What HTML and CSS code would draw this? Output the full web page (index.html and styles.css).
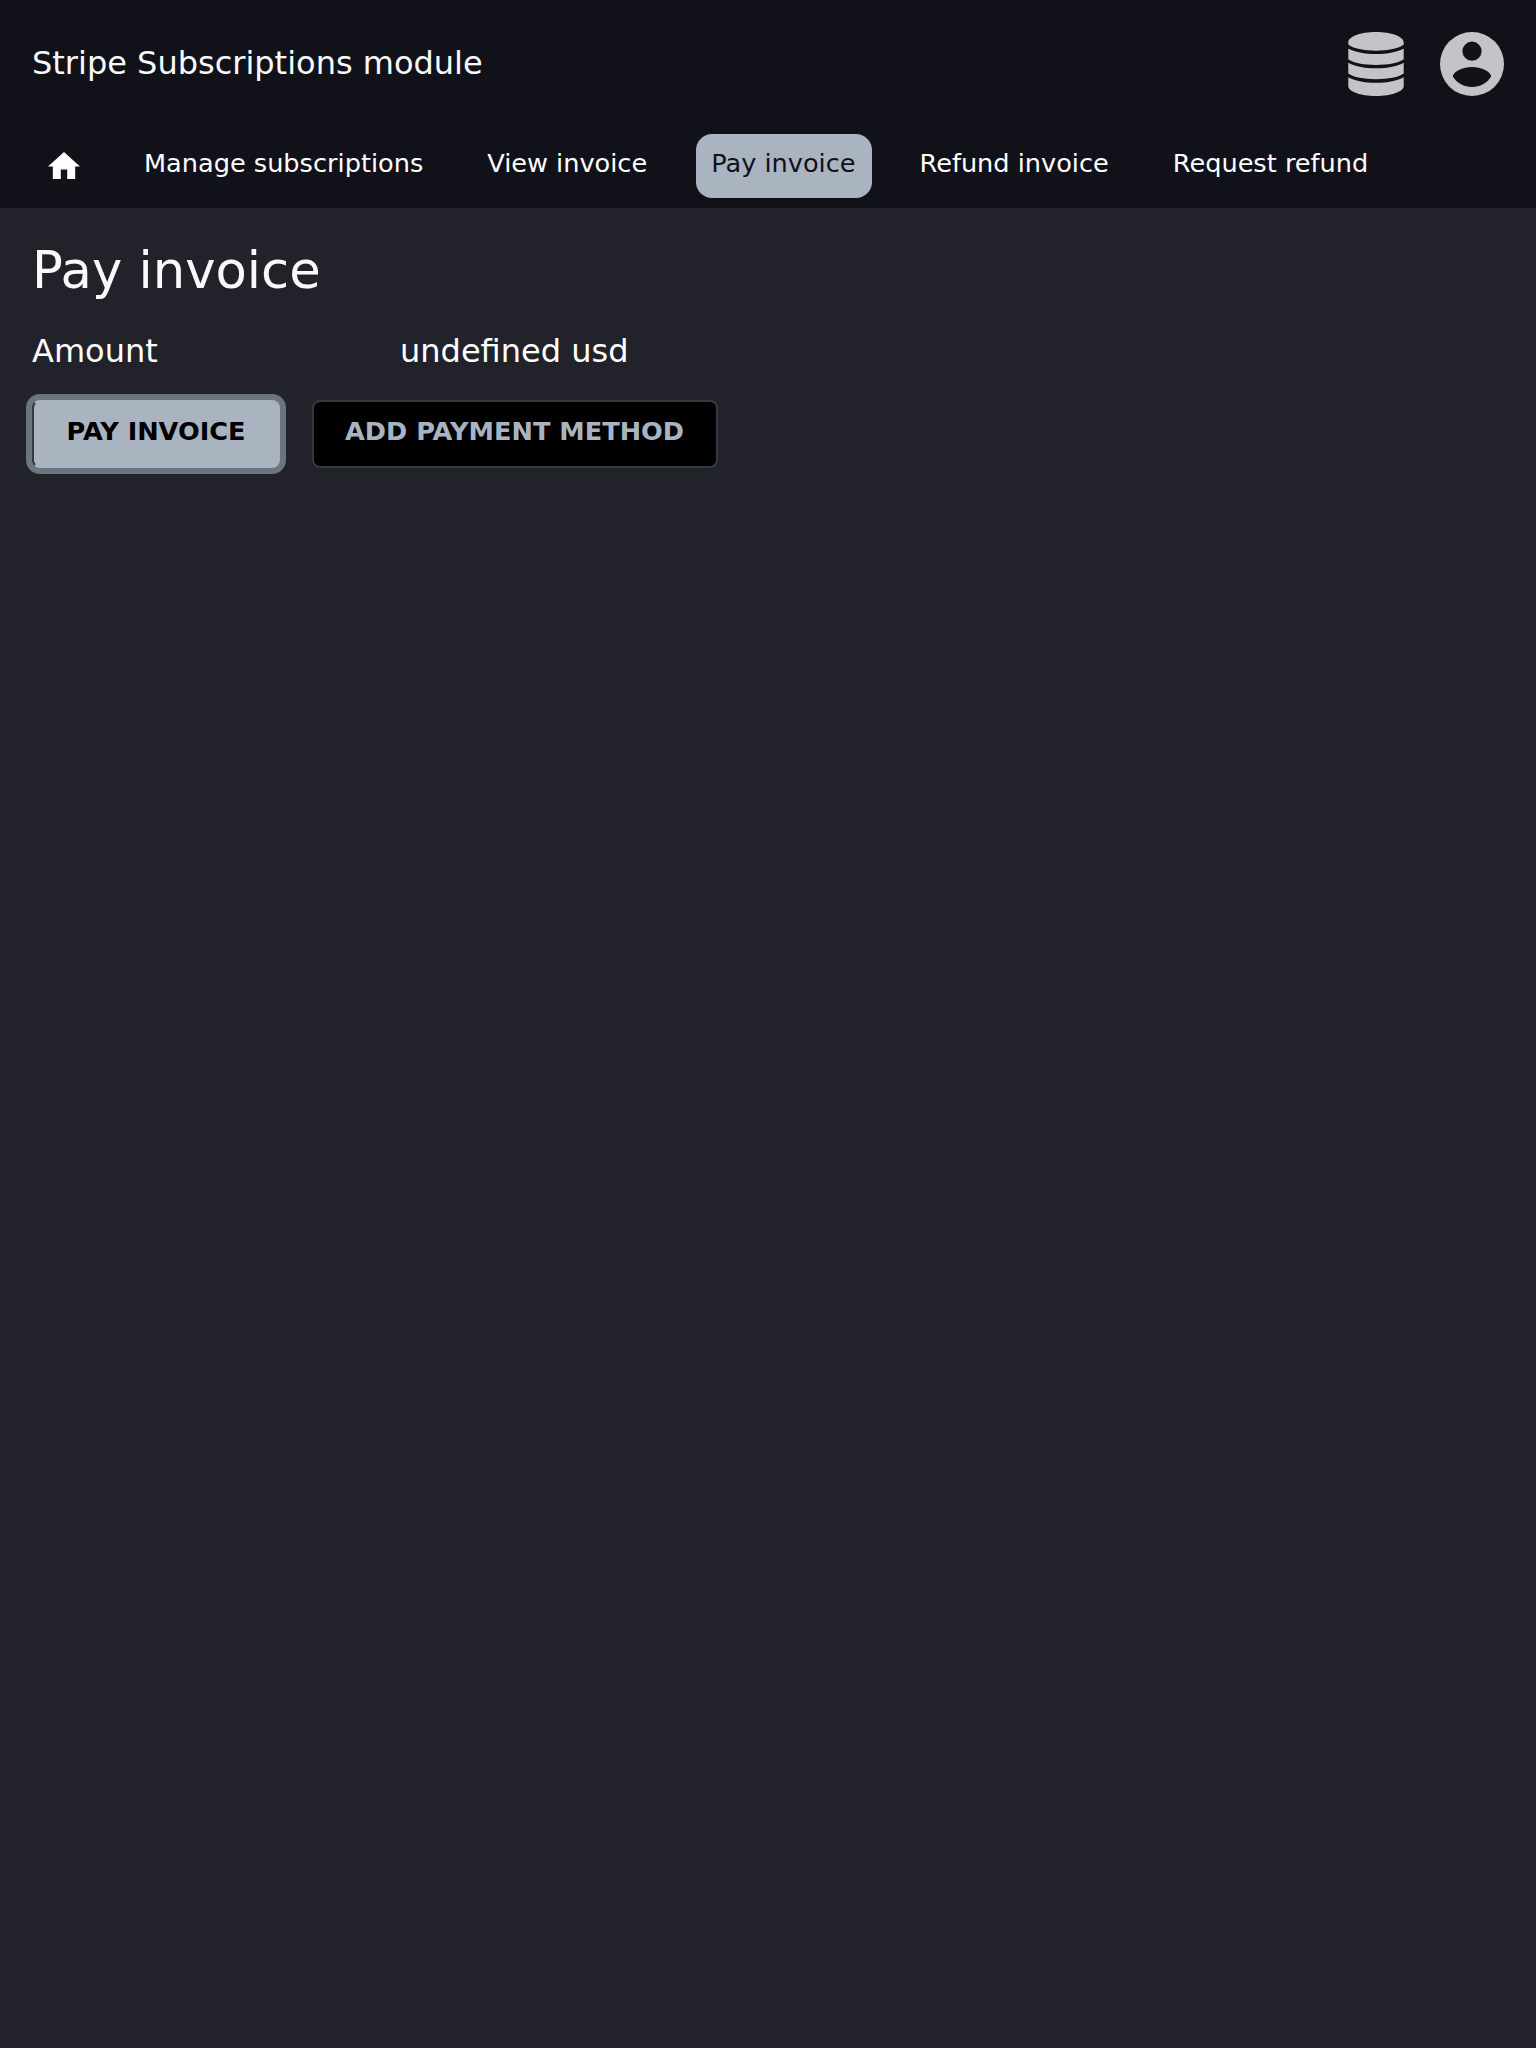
FILE: index.html
```html
<!DOCTYPE html>
<html lang="en">
<head>
<meta charset="utf-8">
<title>Pay invoice</title>
<link rel="stylesheet" href="styles.css">
</head>
<body>
<header class="header">
  <div class="topbar">
    <div class="brand">Stripe Subscriptions module</div>
    <div class="menus">
      <svg class="icon-db" viewBox="-0.3 0 56.6 64" preserveAspectRatio="none"><path d="M0 10.500C0 4.500 12.500 0 28 0s28 4.500 28 10.500v2C51 16.500 40 18.700 28 18.700S5 16.500 0 12.500zM0 16.500C6 20 16 22 28 22s22-2 28-5.500v10.800C51 31 40 33 28 33S5 31 0 27.300zM0 30.800c6 3.500 16 5.500 28 5.500s22-2 28-5.500v10.800c-5 3.700-16 5.700-28 5.700S5 45.300 0 41.600zM0 45.200c6 3.500 16 5.500 28 5.500s22-2 28-5.500V54c0 5.500-12 10-28 10S0 59.500 0 54z"/></svg>
      <svg class="icon-user" viewBox="0 0 64 64"><path fill-rule="evenodd" d="M32 0a32 32 0 1 1 0 64a32 32 0 0 1 0-64zM32 9.600a9.600 9.600 0 1 0 0 19.200a9.600 9.600 0 0 0 0-19.200zM32 35C21 35 13 40.500 12.800 44.500C17 51 24 55 32 55S47 51 51.200 44.500C51 40.500 43 35 32 35z"/></svg>
    </div>
  </div>
  <nav class="nav">
    <a class="nav-link"><svg class="icon-home" viewBox="2 3 20 17"><path d="M10 20v-6h4v6h5v-8h3L12 3 2 12h3v8z"/></svg></a>
    <a class="nav-link">Manage subscriptions</a>
    <a class="nav-link">View invoice</a>
    <a class="nav-link active">Pay invoice</a>
    <a class="nav-link">Refund invoice</a>
    <a class="nav-link">Request refund</a>
  </nav>
</header>
<main class="content">
  <h1 class="title">Pay invoice</h1>
  <div class="row"><div>Amount</div><div>undefined usd</div></div>
  <div class="actions">
    <button class="button primary">PAY INVOICE</button>
    <button class="button">ADD PAYMENT METHOD</button>
  </div>
</main>
</body>
</html>
```
FILE: styles.css
```css
body {
  margin: 0;
  min-height: 2048px;
  background: #22222b;
  color: #fff;
  font: 32px/64px "DejaVu Sans", sans-serif;
}
.header { background: #11111a; height: 208px; }
.topbar {
  display: flex;
  justify-content: space-between;
  align-items: flex-start;
  height: 134px;
  padding: 32px 32px 0;
  box-sizing: border-box;
}
.brand { color: #f8f9fa; line-height: 62px; }
.menus { display: flex; gap: 36px; fill: #c4c4c6; }
.icon-db { width: 56px; height: 64px; }
.icon-user { width: 64px; height: 64px; }
.nav { display: flex; gap: 32px; padding-left: 32px; font-size: 25.6px; }
.nav-link {
  height: 64px;
  padding: 0 16px;
  border-radius: 16px;
  line-height: 59px;
  white-space: nowrap;
}
.nav-link.active {
  margin-left: 0.6px;
  padding-left: 15.4px;
  background: #a9b4c0;
  color: #11111a;
}
.icon-home { display: block; width: 32px; height: 27.2px; margin-top: 18px; fill: #fff; }
.content { padding: 30px 32px; }
.title { margin: 0; font-size: 51.2px; font-weight: 400; line-height: 64px; color: #f8f9fa; }
.row {
  display: grid;
  grid-template-columns: 368px 1fr;
  margin-top: 17px;
}
.actions { display: flex; gap: 32px; margin-top: 17px; }
.button {
  height: 68px;
  padding: 0 31.5px 6px 31px;
  border: 2px solid #343a40;
  border-radius: 8px;
  background: #000;
  color: #a9b4c0;
  font: bold 25.6px "DejaVu Sans", sans-serif;
}
.button.primary {
  width: 248px;
  padding-right: 31px;
  border-color: #a9b4c0 #a9b4c0 #a9b4c0 #343a40;
  background: #a9b4c0;
  color: #000;
  box-shadow: 0 0 0 6px #6c757d;
}
```
